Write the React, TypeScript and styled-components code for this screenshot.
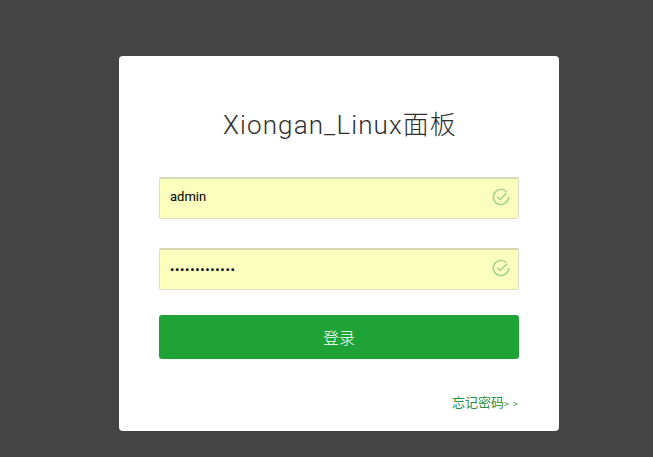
import React from "react";
import styled, { createGlobalStyle } from "styled-components";

const GlobalStyle = createGlobalStyle`
  html, body {
    margin: 0;
    padding: 0;
    height: 100%;
    background: #444444;
    font-family: Roboto, "Noto Sans CJK SC", sans-serif;
  }
`;

const Page = styled.div`
  width: 653px;
  height: 457px;
  background: #444444;
  padding: 56px 0 0 119px;
  box-sizing: border-box;
  overflow: hidden;
`;

const Card = styled.form`
  width: 440px;
  height: 375px;
  box-sizing: border-box;
  background: #fff;
  border-radius: 4px;
  padding: 50px 40px 0;
  display: flex;
  flex-direction: column;
`;

const Title = styled.h1`
  margin: 0 0 32px;
  padding-left: 2px;
  height: 39px;
  line-height: 38px;
  font-size: 26px;
  font-weight: 300;
  letter-spacing: 1.1px;
  text-align: center;
  color: #2f2f2f;
  font-family: Roboto, "Noto Sans CJK SC", sans-serif;
`;

const Field = styled.div`
  position: relative;
  height: 42px;
  margin-bottom: 29px;

  &:nth-of-type(2) {
    margin-bottom: 25px;
  }
`;

const Input = styled.input`
  width: 100%;
  height: 100%;
  box-sizing: border-box;
  padding: 0 40px 4px 10px;
  background: #faffbd;
  border: 1px solid #dcdcc8;
  border-top: 2px solid #d8d8b0;
  border-radius: 2px;
  outline: none;
  color: #000;
  font-size: 13px;
  font-family: Roboto, sans-serif;

  &[type="password"] {
    padding-bottom: 0;
    letter-spacing: 0.65px;
  }
`;

const CheckMark = styled.svg`
  position: absolute;
  right: 9px;
  top: 11px;
  width: 18px;
  height: 18px;
`;

const Submit = styled.button`
  height: 44px;
  border: 0;
  border-radius: 3px;
  background: #1fa336;
  color: #fff;
  font-size: 16px;
  font-family: "Noto Sans CJK SC", sans-serif;
  font-weight: 300;
  padding: 0;
`;

const Footer = styled.div`
  margin-top: 33px;
  display: flex;
  justify-content: flex-end;
`;

const ForgotLink = styled.a`
  color: #2a9140;
  font-size: 13px;
  line-height: 20px;
  text-decoration: none;
  font-family: "Noto Sans CJK SC", sans-serif;
  font-weight: 400;
`;

const Arrows = styled.span`
  font-size: 9px;
  letter-spacing: 1px;
`;

const Check = () => (
  <CheckMark viewBox="0 0 18 18" fill="none" stroke="#9bcf85" strokeWidth="1.3">
    <path d="M14.6 3.9A7.6 7.6 0 1 0 16.6 9" />
    <path d="M5.4 8.8l2.8 2.8 6.4-6.6" />
  </CheckMark>
);

const App: React.FC = () => {
  return (
    <>
      <GlobalStyle />
      <Page>
        <Card onSubmit={(e) => e.preventDefault()}>
          <Title>Xiongan_Linux面板</Title>
          <Field>
            <Input type="text" defaultValue="admin" />
            <Check />
          </Field>
          <Field>
            <Input type="password" defaultValue="aaaaaaaaaaaaa" />
            <Check />
          </Field>
          <Submit type="submit">登录</Submit>
          <Footer>
            <ForgotLink href="#">
              忘记密码<Arrows>&gt; &gt;</Arrows>
            </ForgotLink>
          </Footer>
        </Card>
      </Page>
    </>
  );
};

export default App;
